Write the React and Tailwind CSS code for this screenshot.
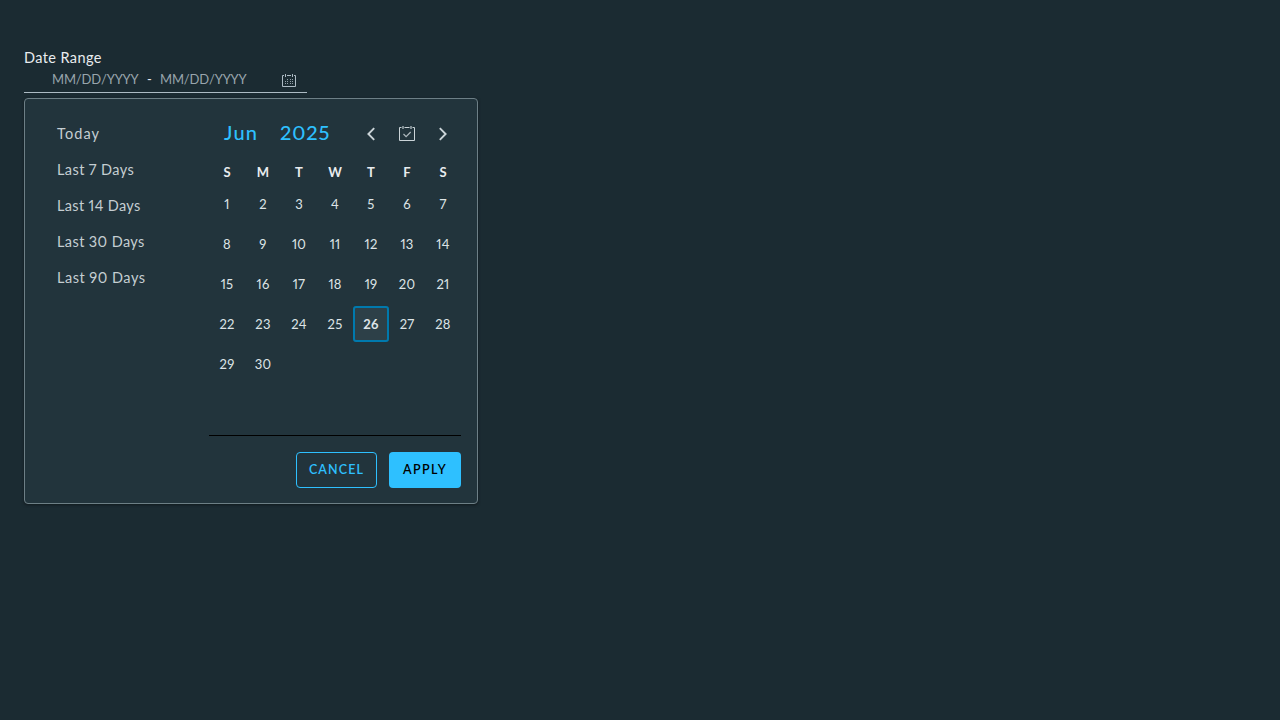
import React from "react";

const presets = [
  { label: "Today", style: "tracking-[1.1px]" },
  { label: "Last 7 Days", style: "tracking-[0.4px]" },
  { label: "Last 14 Days", style: "tracking-[0.35px]" },
  { label: "Last 30 Days", style: "tracking-[0.4px]" },
  { label: "Last 90 Days", style: "tracking-[0.5px]" },
];
const weekdays = ["S", "M", "T", "W", "T", "F", "S"];
const days = Array.from({ length: 30 }, (_, i) => i + 1);
const TODAY = 26;

function CalendarIcon() {
  return (
    <svg className="mt-0.5" width="16" height="16" viewBox="0 0 16 16" fill="none" stroke="#adbbc4">
      <path d="M3 2.5H1.5v11h13v-11H13M6 2.5h4" />
      <path d="M4.5 1v3M11.5 1v3" />
      <path d="M6 6.5h1M9 6.5h1M11 6.5h1M4 8.5h1M6 8.5h1M9 8.5h1M11 8.5h1M4 10.5h1M6 10.5h1M9 10.5h1M11 10.5h1" stroke="#93a1a9" />
    </svg>
  );
}

function EventIcon() {
  return (
    <svg width="16" height="16" viewBox="0 0 16 16" fill="none" stroke="#cbd4d8">
      <path d="M2.5 1.5h-2v13h15v-13h-2M5.5 1.5h5" />
      <path d="M4 0v3M12 0v3" stroke="#8b989e" strokeWidth="1.8" />
      <path d="M4.5 8l2.6 2.6 4.6-4.6" stroke="#aeb9be" strokeWidth="1.2" />
    </svg>
  );
}

function Chevron({ right }) {
  return (
    <svg width="16" height="16" viewBox="0 0 16 16" fill="none" stroke="#cbd4d8" strokeWidth="1.9">
      <path d={right ? "M4.8 2.2L10.6 8l-5.8 5.8" : "M11.2 2.2L5.4 8l5.8 5.8"} />
    </svg>
  );
}

export default function App() {
  return (
    <main className="min-h-screen bg-[#1b2b32] px-6 pt-12 font-['Metropolis','Lato',sans-serif] text-[#e9ecef] proportional-nums">
      <label className="block h-5 text-[14.5px] leading-5 tracking-[0.4px]">Date Range</label>
      <div className="flex h-[25px] w-[283px] items-center border-b border-[#adbbc4] pl-7 text-[13px] text-[#98a5ac]">
        <span className="w-[95px] tracking-[-0.15px]">MM/DD/YYYY</span>
        <span className="w-[13px] text-[#e9ecef]">-</span>
        <span className="w-[121px] tracking-[-0.15px]">MM/DD/YYYY</span>
        <CalendarIcon />
      </div>

      <section className="mt-[5px] flex h-[406px] w-[454px] rounded border border-[#6d7f86] bg-[#22343c] pt-4 pr-4 pb-[15px] shadow-[0_1px_3px_#10191d]">
        <div className="flex w-[184px] flex-col pl-8 text-[14.5px] text-[#c5ced2]">
          {presets.map((p) => (
            <button key={p.label} className={`h-9 pt-px text-left leading-9 ${p.style}`}>
              {p.label}
            </button>
          ))}
        </div>
        <div className="flex w-[252px] flex-col">
          <header className="flex h-9 items-center text-[20px] font-medium text-[#2ec0ff]">
            <span className="w-14 pb-0.5 pl-[15px] tracking-[1.2px]">Jun</span>
            <span className="ml-[15px] flex-1 pb-0.5 tracking-[0.9px]">2025</span>
            <button className="flex w-9 justify-center pt-px"><Chevron /></button>
            <button className="flex w-9 justify-center pt-px"><EventIcon /></button>
            <button className="flex w-9 justify-center pt-px"><Chevron right /></button>
          </header>
          <div className="mt-[9px] grid h-[26px] grid-cols-7 text-center text-[13px] leading-[25px] font-bold">
            {weekdays.map((d, i) => <span key={i}>{d}</span>)}
          </div>
          <div className="grid h-[248px] grid-cols-7 content-start gap-y-1 text-[13px] text-[#dee4e7]">
            {days.map((d) => (
              <button
                key={d}
                className={
                  d === TODAY
                    ? "h-9 rounded-[3px] border-2 border-[#0079ad] bg-[#2d4048] pt-px font-bold tracking-[0.3px]"
                    : "h-9 pt-px tracking-[0.2px]"
                }
              >
                {d}
              </button>
            ))}
          </div>
          <div className="mt-auto flex justify-end gap-3 border-t border-black pt-4 text-[12.5px] font-semibold">
            <button className="h-9 w-[81px] rounded border border-[#2ec0ff] tracking-[1.1px] text-[#2ec0ff]">CANCEL</button>
            <button className="h-9 w-[72px] rounded bg-[#2ec0ff] tracking-[1.4px] text-black">APPLY</button>
          </div>
        </div>
      </section>
    </main>
  );
}
